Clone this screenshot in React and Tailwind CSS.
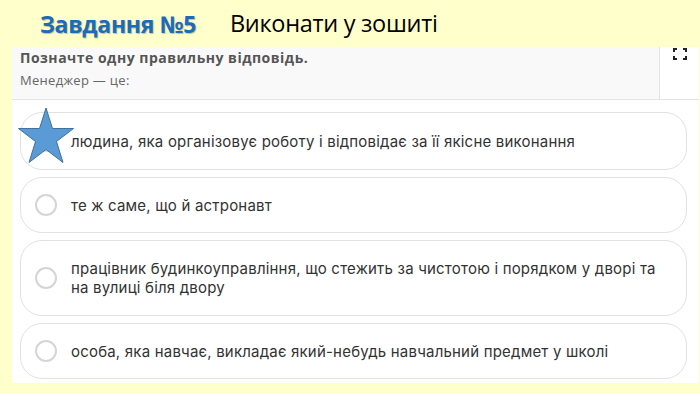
import React from "react";

const Radio = () => (
  <div className="w-[22px] h-[22px] shrink-0 rounded-full border-2 border-[#d5d5d8] bg-white" />
);

const Option = ({ children, className = "" }) => (
  <div
    className={`flex items-center gap-[14px] rounded-[22px] border border-[#e2e2e2] bg-white pl-[14px] pr-4 ${className}`}
  >
    <Radio />
    <div className="text-[15px] leading-[19px] tracking-[0.2px] text-[#333333] font-['Inter','Noto_Sans',sans-serif]">
      {children}
    </div>
  </div>
);

export default function App() {
  return (
    <div className="w-[700px] h-[394px] bg-[#FFFFCC] overflow-hidden relative">
      <div className="h-[47px] flex items-center pl-[40px] pt-[1px]">
        <span className="text-[23px] font-bold text-[#1B6CB8] font-['Open_Sans',sans-serif] tracking-[-0.3px] [text-shadow:1px_1px_1px_rgba(0,0,0,0.25)]">
          Завдання №5
        </span>
        <span className="ml-[34px] text-[23.5px] text-black font-['Open_Sans',sans-serif] tracking-[-0.3px]">
          Виконати у зошиті
        </span>
      </div>
      <div className="ml-[12px] w-[687px] h-[336px] bg-white flex flex-col">
        <div className="h-[53px] flex border-b border-[#e4e4e4] bg-[#f9f9f9]">
          <div className="flex-1 pl-[8px] pt-[1px] font-['Open_Sans',sans-serif]">
            <div className="text-[14px] font-bold text-[#555555] leading-[19px] tracking-[0.5px]">
              Позначте одну правильну відповідь.
            </div>
            <div className="text-[13px] text-[#666666] mt-[5px] leading-[17px] tracking-[0.3px]">
              Менеджер — це:
            </div>
          </div>
          <div className="w-[40px] border-l border-[#e4e4e4] bg-white flex justify-center pt-[1px]">
            <svg width="14" height="12" viewBox="0 0 14 12" fill="none" stroke="#222" strokeWidth="2">
              <path d="M1 4V1h3M10 1h3v3M13 8v3h-3M4 11H1V8" />
            </svg>
          </div>
        </div>
        <div className="flex flex-col gap-[7px] pl-[8px] pr-[12px] pt-[12px]">
          <Option className="h-[58px]">
            людина, яка організовує роботу і відповідає за її якісне виконання
          </Option>
          <Option className="h-[56px]">те ж саме, що й астронавт</Option>
          <Option className="h-[76px]">
            працівник будинкоуправління, що стежить за чистотою і порядком у дворі та
            <br />
            на вулиці біля двору
          </Option>
          <Option className="h-[56px]">
            особа, яка навчає, викладає який-небудь навчальний предмет у школі
          </Option>
        </div>
      </div>
      <svg
        className="absolute left-[18px] top-[107px]"
        width="58"
        height="57"
        viewBox="0 0 58 57"
      >
        <polygon
          points="28,1 34.5,21.5 55.5,21.5 38.5,34.5 45,55.5 28,42.5 11,55.5 17.5,34.5 0.5,21.5 21.5,21.5"
          fill="#5B9BD5"
          stroke="#41719C"
          strokeWidth="1"
        />
      </svg>
    </div>
  );
}
